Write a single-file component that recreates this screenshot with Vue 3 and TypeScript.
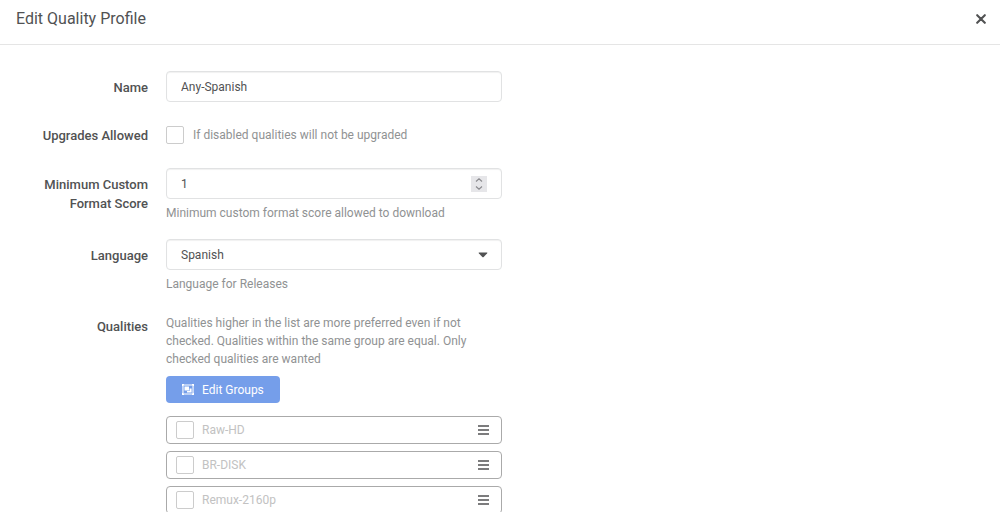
<script setup lang="ts">
import { ref } from 'vue'

interface Quality {
  id: number
  name: string
  allowed: boolean
}

const name = ref('Any-Spanish')
const upgradesAllowed = ref(false)
const minScore = ref(1)
const language = ref('Spanish')
const qualities = ref<Quality[]>([
  { id: 1, name: 'Raw-HD', allowed: false },
  { id: 2, name: 'BR-DISK', allowed: false },
  { id: 3, name: 'Remux-2160p', allowed: false },
])
</script>

<template>
  <main class="modal">
    <header class="header">
      <h1 class="title">Edit Quality Profile</h1>
      <button class="close" type="button" aria-label="Close">
        <svg viewBox="0 0 10 10" width="10" height="10" aria-hidden="true">
          <path d="M1.2 1.2 8.8 8.8M8.8 1.2 1.2 8.8" fill="none" stroke="currentColor" stroke-width="2.1" stroke-linecap="round" />
        </svg>
      </button>
    </header>

    <form class="form" @submit.prevent>
      <div class="group">
        <label class="label" for="name">Name</label>
        <div class="field">
          <input id="name" v-model="name" class="input" type="text" />
        </div>
      </div>

      <div class="group">
        <label class="label" for="upgrades">Upgrades Allowed</label>
        <div class="field check-field">
          <input id="upgrades" v-model="upgradesAllowed" class="check" type="checkbox" aria-describedby="upgrades-help" />
          <span id="upgrades-help" class="help">If disabled qualities will not be upgraded</span>
        </div>
      </div>

      <div class="group">
        <label class="label" for="score">Minimum Custom Format Score</label>
        <div class="field">
          <div class="control">
            <input id="score" v-model.number="minScore" class="input number" type="number" />
            <div class="stepper">
              <button type="button" aria-label="Increase" @click="minScore++">
                <svg viewBox="0 0 8 4" width="8" height="4" aria-hidden="true"><path d="M1 3.5 4 .8l3 2.7" /></svg>
              </button>
              <button type="button" aria-label="Decrease" @click="minScore--">
                <svg viewBox="0 0 8 4" width="8" height="4" aria-hidden="true"><path d="M1 .5 4 3.2 7 .5" /></svg>
              </button>
            </div>
          </div>
          <p class="help below">Minimum custom format score allowed to download</p>
        </div>
      </div>

      <div class="group">
        <label class="label" for="language">Language</label>
        <div class="field">
          <div class="control">
            <select id="language" v-model="language" class="input select">
              <option>Spanish</option>
            </select>
            <svg class="caret" viewBox="0 0 10 6" width="10" height="6" aria-hidden="true">
              <path d="M1.2.5h7.6q1 0 .4.8L5.7 5q-.7.7-1.4 0L.8 1.3Q.2.5 1.2.5z" fill="currentColor" />
            </svg>
          </div>
          <p class="help below">Language for Releases</p>
        </div>
      </div>

      <div class="group">
        <span id="qualities-label" class="label">Qualities</span>
        <div class="field" role="group" aria-labelledby="qualities-label">
          <p class="help intro">
            Qualities higher in the list are more preferred even if not checked. Qualities within the same group are equal. Only checked qualities are wanted
          </p>
          <button class="edit" type="button">
            <svg viewBox="0 0 12 11" width="12" height="11" aria-hidden="true">
              <path fill="currentColor" fill-rule="evenodd" d="M0 0h2v.4h8V0h2v2h-.4v7h.4v2h-2v-.4H2v.4H0V9h.4V2H0zM1.500 1.500v8h9v-8z" />
              <path fill="currentColor" d="M2.500 2.500H7v4H2.500zM7.600 4.500h2v4H5V7.100h2.600z" />
            </svg>
            Edit Groups
          </button>
          <ul class="list">
            <li v-for="quality in qualities" :key="quality.id" class="item">
              <label class="quality">
                <input v-model="quality.allowed" class="check" type="checkbox" />
                {{ quality.name }}
              </label>
              <button class="handle" type="button" :aria-label="`Reorder ${quality.name}`">
                <svg viewBox="0 0 11 10" width="11" height="10" aria-hidden="true">
                  <path d="M0 1h11M0 5h11M0 9h11" fill="none" stroke="currentColor" stroke-width="1.6" />
                </svg>
              </button>
            </li>
          </ul>
        </div>
      </div>
    </form>
  </main>
</template>

<style>
body {
  margin: 0;
  background: #fff;
}
</style>

<style scoped>
* {
  box-sizing: border-box;
}

.modal {
  height: 100vh;
  overflow: hidden;
  color: #515253;
  font: 12px/18px Roboto, "Liberation Sans", sans-serif;
}

button,
input,
select {
  margin: 0;
  font: inherit;
  color: inherit;
}

button {
  display: flex;
  align-items: center;
  justify-content: center;
  padding: 0;
  border: 0;
  background: none;
  cursor: pointer;
}

.header {
  display: flex;
  align-items: center;
  justify-content: space-between;
  padding: 6px 9px 12px 16px;
  border-bottom: 1px solid #e5e5e5;
}

.title {
  margin: 0;
  font-size: 16px;
  font-weight: 400;
  line-height: 26px;
}

.close {
  width: 20px;
  height: 24px;
}

.form {
  display: flex;
  flex-direction: column;
  gap: 17px;
  max-width: 502px;
  padding-top: 26px;
}

.group {
  display: flex;
  gap: 18px;
}

.group:nth-child(2) {
  min-height: 32px;
}

.label {
  flex: 0 0 148px;
  padding: 7px 0 0 27px;
  font-size: 13px;
  font-weight: 500;
  line-height: 19px;
  text-align: right;
}

.field {
  flex: 1;
  min-width: 0;
}

.check-field {
  display: flex;
  align-items: center;
  gap: 9px;
}

.control {
  position: relative;
}

.input {
  display: block;
  width: 100%;
  height: 31px;
  padding: 0 14px;
  border: 1px solid #e1e2e3;
  border-radius: 4px;
  outline: none;
  background: #fff;
  box-shadow: inset 0 1px 1px rgba(0, 0, 0, 0.06);
}

.select,
.number {
  appearance: none;
}

.number::-webkit-inner-spin-button {
  display: none;
}

.stepper {
  position: absolute;
  top: 8px;
  right: 15px;
  display: flex;
  flex-direction: column;
  width: 16px;
  height: 16px;
  background: #e6e6e9;
}

.stepper button {
  flex: 1;
}

.stepper path {
  fill: none;
  stroke: #8b8b8f;
  stroke-width: 1.2;
}

.caret {
  position: absolute;
  top: 13px;
  right: 14px;
  pointer-events: none;
}

.help {
  margin: 0;
  color: #909293;
}

.below {
  padding-top: 5px;
}

.intro {
  padding-top: 4px;
}

.check {
  flex: none;
  width: 18px;
  height: 18px;
  appearance: none;
  border: 1px solid #ccc;
  border-radius: 2px;
  background: #fff;
}

.check:checked {
  background: #5d9cec;
}

.edit {
  gap: 8px;
  height: 27px;
  margin: 8px 0 13px;
  padding: 0 16px;
  border-radius: 4px;
  background: #759eea;
  color: #fff;
}

.list {
  display: flex;
  flex-direction: column;
  gap: 7px;
  margin: 0;
  padding: 0;
  list-style: none;
}

.item {
  display: flex;
  justify-content: space-between;
  height: 28px;
  border: 1px solid #aaa;
  border-radius: 4px;
}

.quality {
  display: flex;
  flex: 1;
  align-items: center;
  gap: 8px;
  padding-left: 9px;
  color: #c2c2c2;
}

.handle {
  width: 35px;
}
</style>
